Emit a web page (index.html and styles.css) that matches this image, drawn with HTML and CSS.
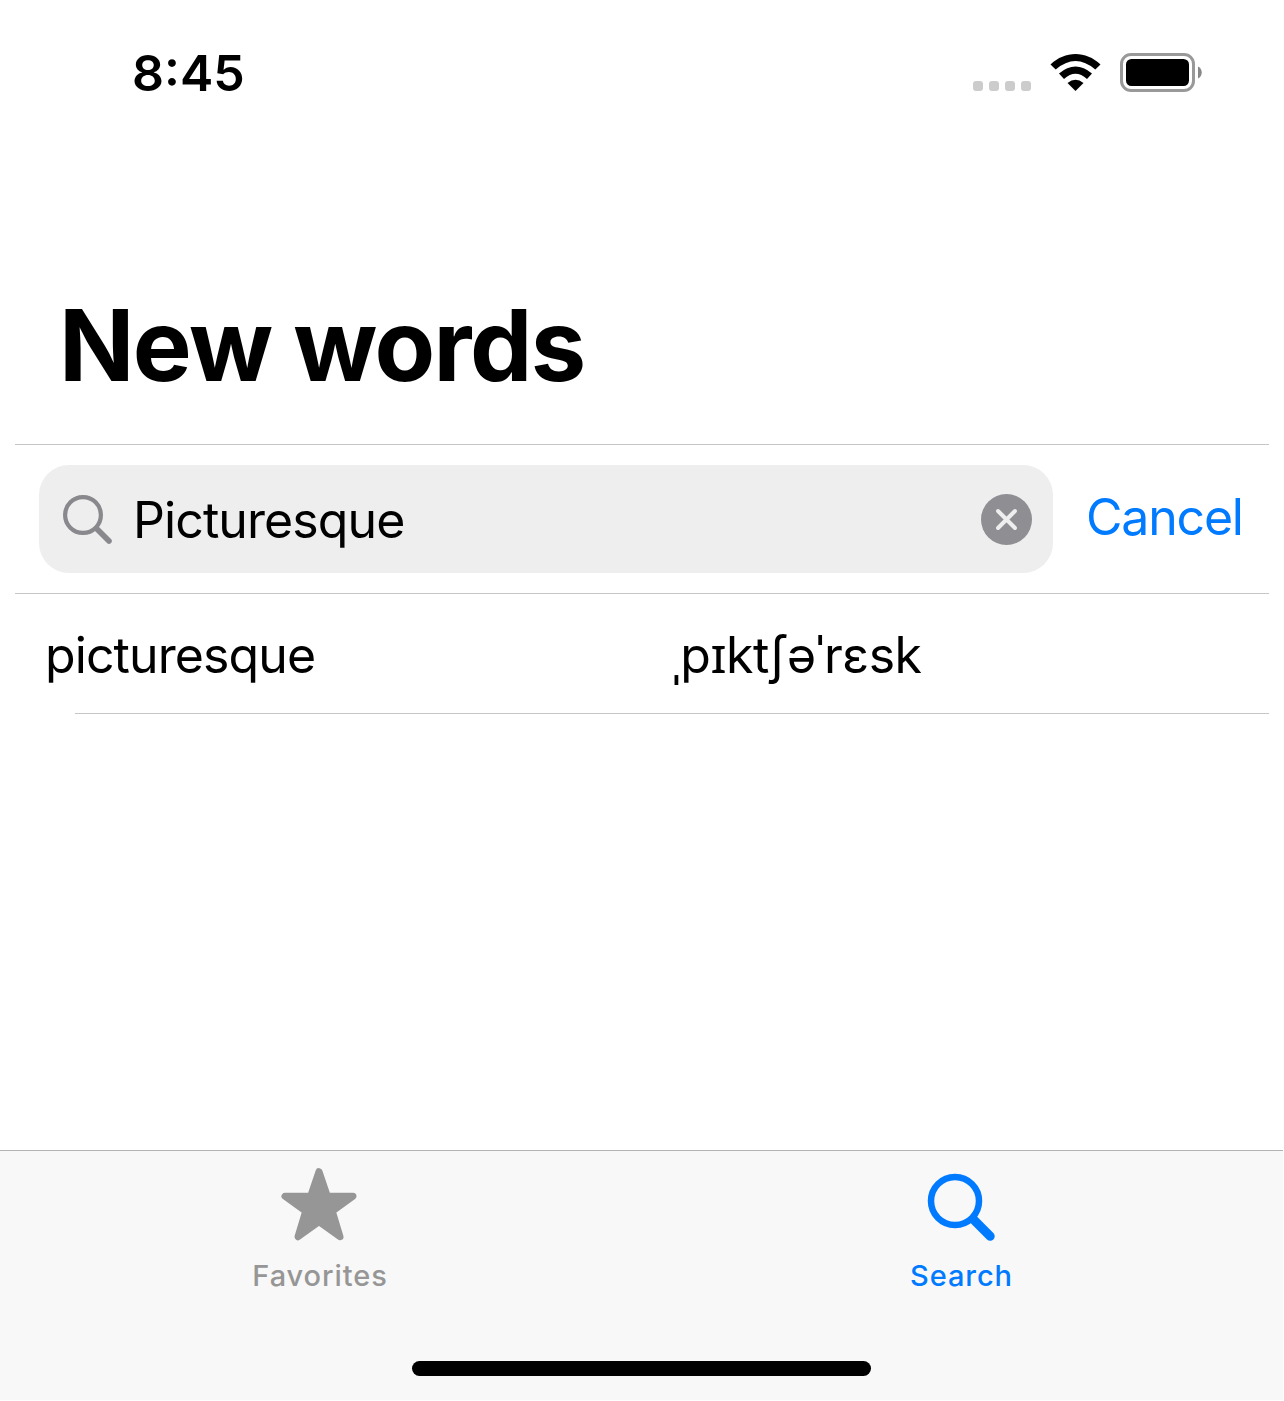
FILE: index.html
```html
<!DOCTYPE html>
<html lang="en">
<head>
<meta charset="utf-8">
<title>New words</title>
<link rel="stylesheet" href="styles.css">
</head>
<body>
<div class="screen">
  <header class="status">
    <span class="time">8:45</span>
    <div class="indicators">
      <div class="dots"><i></i><i></i><i></i><i></i></div>
      <svg class="wifi" width="52" height="39" viewBox="0 0 52 39">
        <path d="M.5 11.500C15-2.500 36-2.500 50.500 11.500L45.300 16.500Q25.500-.5 5.700 16.500Z"/>
        <path d="M9 20.500Q25.500 6.500 42 20.500L37 26Q25.500 15.500 14 26Z"/>
        <path d="M17.500 30Q25.500 23.500 33.500 30L25.500 38Z"/>
      </svg>
      <svg class="battery" width="82" height="39" viewBox="0 0 82 39">
        <rect x="1.500" y="1.500" width="72" height="36" rx="9.500" fill="none" stroke="#999" stroke-width="3"/>
        <rect x="6" y="6" width="63" height="27" rx="5.500"/>
        <path d="M78 13.500C83 15.500 83 23.500 78 25.500Z" fill="#888"/>
      </svg>
    </div>
  </header>
  <h1 class="title">New words</h1>
  <main class="list">
    <div class="search-row">
      <div class="field">
        <svg class="lens" width="50" height="50" viewBox="0 0 50 50" fill="none" stroke="#88888d">
          <circle cx="20" cy="20" r="17.900" stroke-width="4.200"/>
          <path d="M33.500 33.500L46 46" stroke-width="5.600" stroke-linecap="round"/>
        </svg>
        <span class="query">Picturesque</span>
        <svg class="clear" width="51" height="51" viewBox="0 0 51 51">
          <circle cx="25.500" cy="25.500" r="25.500" fill="#8e8e93"/>
          <path d="M17 17L34 34M34 17L17 34" stroke="#eee" stroke-width="4" stroke-linecap="round"/>
        </svg>
      </div>
      <a class="cancel">Cancel</a>
    </div>
    <div class="word-row">
      <span class="word">picturesque</span>
      <span class="phonetic">ˌpɪktʃəˈrɛsk</span>
    </div>
    <div class="divider"></div>
  </main>
  <footer class="bottom">
    <nav class="tabs">
      <a class="tab">
        <svg class="tab-icon" width="78" height="76" viewBox="0 0 78 76">
          <path d="M39 4.700L47.300 29.200H73L52.300 44.200L60 69.700L39 54.700L18 69.700L25.700 44.200L5 29.200H30.700Z" fill="#969696" stroke="#969696" stroke-width="7" stroke-linejoin="round"/>
        </svg>
        <span class="label">Favorites</span>
      </a>
      <a class="tab active">
        <svg class="tab-icon" width="78" height="76" viewBox="0 0 78 76" fill="none" stroke="#007aff">
          <circle cx="33" cy="34" r="24" stroke-width="6.500"/>
          <path d="M52 53L68.200 69.200" stroke-width="9" stroke-linecap="round"/>
        </svg>
        <span class="label">Search</span>
      </a>
    </nav>
    <div class="home"></div>
  </footer>
</div>
</body>
</html>
```
FILE: styles.css
```css
body {
  margin: 0;
  background: #fff;
  color: #000;
  font-family: Inter, "Noto Sans", sans-serif;
}
.screen {
  width: 1283px;
  height: 1400px;
  display: flex;
  flex-direction: column;
  overflow: hidden;
}
.status {
  display: flex;
  justify-content: space-between;
  align-items: flex-start;
  height: 242px;
  padding: 43px 81px 0 132px;
}
.time {
  font-size: 50px;
  line-height: 60px;
  font-weight: 600;
}
.indicators {
  display: flex;
  align-items: flex-start;
  padding-top: 10px;
}
.dots {
  display: flex;
  gap: 6px;
  margin: 28px 19px 0 0;
}
.dots i {
  width: 10px;
  height: 10px;
  border-radius: 3px;
  background: #ccc;
}
.wifi { margin-right: 18px; }
.title {
  margin: 0 0 39px 59px;
  font-size: 99px;
  line-height: 120px;
  font-weight: 700;
  letter-spacing: -1.6px;
}
.list { margin: 0 14px 0 15px; }
.search-row {
  display: flex;
  align-items: center;
  height: 148px;
  border: solid #c6c6c8;
  border-width: 1px 0;
}
.field {
  display: flex;
  align-items: center;
  box-sizing: border-box;
  width: 1014px;
  height: 108px;
  margin-left: 24px;
  padding: 0 21px 0 24px;
  border-radius: 30px;
  background: #eee;
}
.lens { margin-top: 2px; }
.clear { margin-top: 1px; }
.query {
  flex: 1;
  margin-left: 20px;
  padding-top: 2px;
  font-size: 50px;
  letter-spacing: -0.9px;
}
.cancel {
  margin: -4px 0 0 33px;
  color: #007aff;
  font-size: 50px;
  letter-spacing: -1.2px;
}
.word-row {
  display: grid;
  grid-template-columns: 627px 1fr;
  align-items: center;
  height: 119px;
  padding: 2px 0 0 30px;
  box-sizing: border-box;
  font-size: 50px;
}
.word { letter-spacing: -0.9px; }
.phonetic {
  letter-spacing: -0.5px;
  padding-bottom: 2px;
}
.divider {
  height: 1px;
  margin-left: 60px;
  background: #c6c6c8;
}
.bottom {
  margin-top: auto;
  height: 249px;
  border-top: 1px solid #b2b2b2;
  background: #f8f8f8;
}
.tabs {
  display: grid;
  grid-template-columns: 638px 645px;
  height: 210px;
}
.tab {
  display: flex;
  flex-direction: column;
  align-items: center;
  padding-top: 16px;
  color: #969696;
}
.active { color: #007aff; }
.label {
  margin-top: 15px;
  padding-left: 2px;
  font-size: 29px;
  line-height: 36px;
  font-weight: 500;
  letter-spacing: 0.9px;
}
.home {
  width: 459px;
  height: 15px;
  margin: 0 auto;
  border-radius: 8px;
  background: #000;
}
```
